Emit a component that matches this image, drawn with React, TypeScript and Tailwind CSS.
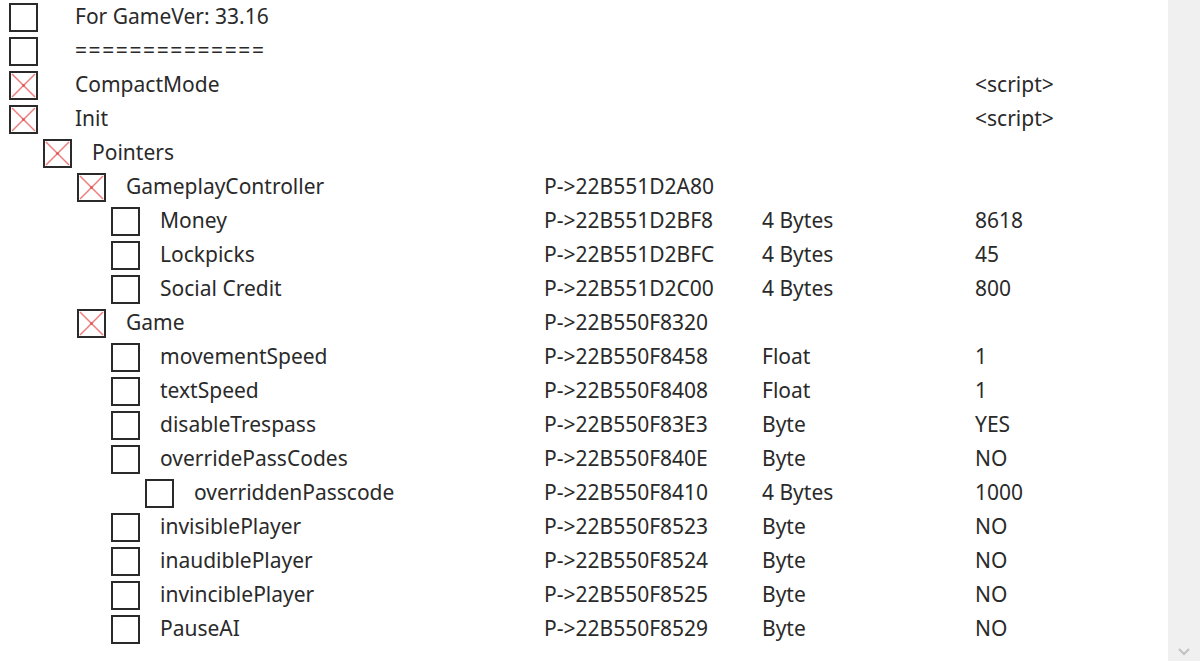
import React from "react";

type Row = { level: number; name: string; checked: boolean; addr?: string; type?: string; value?: string };

const rows: Row[] = [
  { level: 0, name: "For GameVer: 33.16", checked: false },
  { level: 0, name: "==============", checked: false },
  { level: 0, name: "CompactMode", checked: true, value: "<script>" },
  { level: 0, name: "Init", checked: true, value: "<script>" },
  { level: 1, name: "Pointers", checked: true },
  { level: 2, name: "GameplayController", checked: true, addr: "P->22B551D2A80" },
  { level: 3, name: "Money", checked: false, addr: "P->22B551D2BF8", type: "4 Bytes", value: "8618" },
  { level: 3, name: "Lockpicks", checked: false, addr: "P->22B551D2BFC", type: "4 Bytes", value: "45" },
  { level: 3, name: "Social Credit", checked: false, addr: "P->22B551D2C00", type: "4 Bytes", value: "800" },
  { level: 2, name: "Game", checked: true, addr: "P->22B550F8320" },
  { level: 3, name: "movementSpeed", checked: false, addr: "P->22B550F8458", type: "Float", value: "1" },
  { level: 3, name: "textSpeed", checked: false, addr: "P->22B550F8408", type: "Float", value: "1" },
  { level: 3, name: "disableTrespass", checked: false, addr: "P->22B550F83E3", type: "Byte", value: "YES" },
  { level: 3, name: "overridePassCodes", checked: false, addr: "P->22B550F840E", type: "Byte", value: "NO" },
  { level: 4, name: "overriddenPasscode", checked: false, addr: "P->22B550F8410", type: "4 Bytes", value: "1000" },
  { level: 3, name: "invisiblePlayer", checked: false, addr: "P->22B550F8523", type: "Byte", value: "NO" },
  { level: 3, name: "inaudiblePlayer", checked: false, addr: "P->22B550F8524", type: "Byte", value: "NO" },
  { level: 3, name: "invinciblePlayer", checked: false, addr: "P->22B550F8525", type: "Byte", value: "NO" },
  { level: 3, name: "PauseAI", checked: false, addr: "P->22B550F8529", type: "Byte", value: "NO" },
];

function Box({ checked }: { checked: boolean }) {
  return (
    <div className="relative w-[29px] h-[29px] shrink-0 border-2 border-[#2a2a2a] bg-white">
      {checked && (
        <svg className="absolute inset-0" width="25" height="25" viewBox="0 0 25 25">
          <line x1="1" y1="1" x2="24" y2="24" stroke="#ee7f7f" strokeWidth="1.6" />
          <line x1="24" y1="1" x2="1" y2="24" stroke="#ee7f7f" strokeWidth="1.6" />
          <circle cx="12.5" cy="12.5" r="1.3" fill="#e05050" />
        </svg>
      )}
    </div>
  );
}

const pad = ["pl-[9px]", "pl-[43px]", "pl-[77px]", "pl-[111px]", "pl-[145px]"];

export default function App() {
  return (
    <div
      className="w-[1200px] h-[661px] flex bg-white overflow-hidden text-[#2a2a2a]"
      style={{ fontFamily: '"Noto Sans", "Open Sans", sans-serif' }}
    >
      <div className="flex-1 flex flex-col text-[21px] leading-none">
        {rows.map((r, i) => (
          <div key={i} className="h-[34px] flex items-center">
            <div className={`w-[544px] shrink-0 flex items-center ${pad[r.level]}`}>
              <Box checked={r.checked} />
              <span
                className={
                  (r.level === 0 ? "ml-[37px]" : "ml-[20px]") +
                  " whitespace-nowrap -mt-[2px]" +
                  (r.name.startsWith("=") ? " tracking-[1.6px]" : "")
                }
              >
                {r.name}
              </span>
            </div>
            <div className="w-[218px] shrink-0 whitespace-nowrap -mt-[2px]">{r.addr ?? ""}</div>
            <div className="w-[213px] shrink-0 whitespace-nowrap -mt-[2px]">{r.type ?? ""}</div>
            <div className="flex-1 whitespace-nowrap -mt-[2px]">{r.value ?? ""}</div>
          </div>
        ))}
      </div>
      <div className="w-[32px] h-full bg-[#f0f0f0] flex flex-col justify-end items-center pb-[4px]">
        <svg width="14" height="10" viewBox="0 0 14 10">
          <polyline points="2,2 7,7 12,2" fill="none" stroke="#c2c2c2" strokeWidth="2" />
        </svg>
      </div>
    </div>
  );
}
